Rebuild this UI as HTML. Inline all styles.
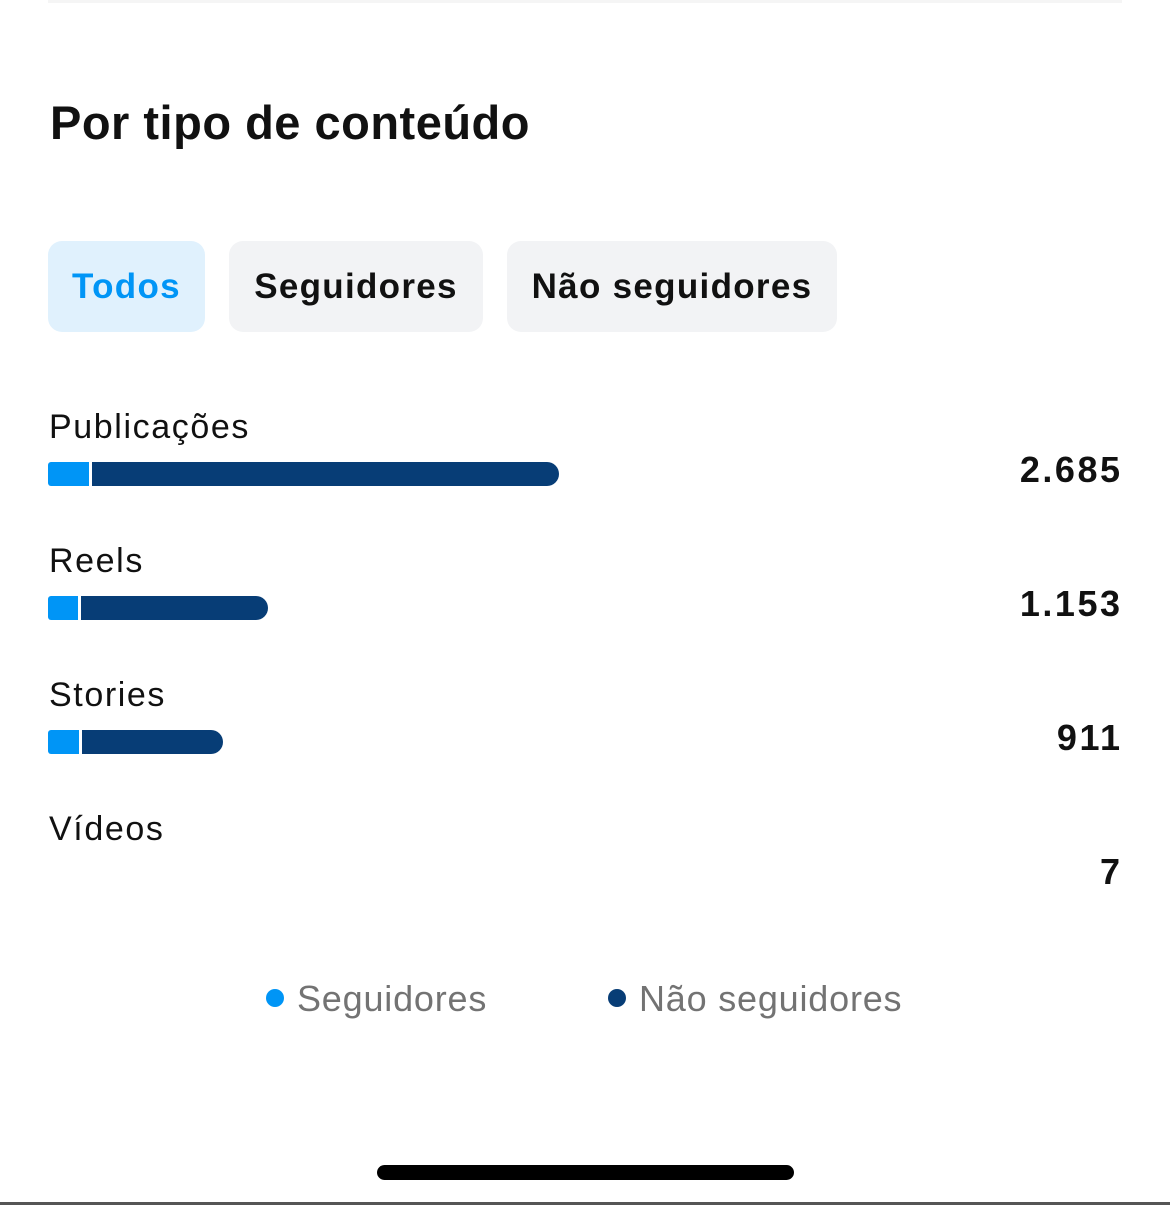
<!DOCTYPE html>
<html><head><meta charset="utf-8"><style>
body{margin:0;width:1170px;height:1205px;background:#fff;position:relative;overflow:hidden;font-family:"Liberation Sans",sans-serif;color:#111}
.a{position:absolute}
.btn{position:absolute;top:241px;height:91px;border-radius:14px;background:#f2f3f5;font-weight:bold;font-size:35px;letter-spacing:1.3px;line-height:91px;text-align:center;color:#111}
.lbl{position:absolute;left:49px;font-size:34px;line-height:40px;letter-spacing:1.6px}
.num{position:absolute;right:50px;font-size:36px;font-weight:bold;line-height:40px;text-align:right;letter-spacing:2.5px;margin-right:-2.5px}
.l{position:absolute;left:48px;height:24px;background:#0095f6;border-radius:3px 0 0 3px}
.d{position:absolute;height:24px;background:#073d76;border-radius:0 12px 12px 0}
.dot{position:absolute;width:18px;height:18px;border-radius:50%}
.lg{position:absolute;font-size:36px;color:#737373;line-height:40px;letter-spacing:0.8px}
</style></head><body>
<div class="a" style="left:48px;top:0;width:1074px;height:3px;background:#f5f5f5"></div>
<div class="a" style="left:50px;top:96px;font-size:47px;font-weight:bold;line-height:54px;letter-spacing:0.5px">Por tipo de conteúdo</div>
<div class="btn" style="left:48px;width:157px;background:#e0f1fd;color:#0095f6">Todos</div>
<div class="btn" style="left:229px;width:254px">Seguidores</div>
<div class="btn" style="left:507px;width:330px">Não seguidores</div>

<div class="lbl" style="top:407px">Publicações</div>
<div class="l" style="top:462px;width:41px"></div><div class="d" style="top:462px;left:92px;width:467px"></div>
<div class="num" style="top:450px">2.685</div>

<div class="lbl" style="top:541px">Reels</div>
<div class="l" style="top:596px;width:30px"></div><div class="d" style="top:596px;left:81px;width:187px"></div>
<div class="num" style="top:584px">1.153</div>

<div class="lbl" style="top:675px">Stories</div>
<div class="l" style="top:730px;width:31px"></div><div class="d" style="top:730px;left:82px;width:141px"></div>
<div class="num" style="top:718px">911</div>

<div class="lbl" style="top:809px">Vídeos</div>
<div class="num" style="top:852px">7</div>

<div class="dot" style="left:266px;top:989px;background:#0095f6"></div>
<div class="lg" style="left:297px;top:979px">Seguidores</div>
<div class="dot" style="left:608px;top:989px;background:#073d76"></div>
<div class="lg" style="left:639px;top:979px">Não seguidores</div>

<div class="a" style="left:377px;top:1165px;width:417px;height:15px;border-radius:8px;background:#000"></div>
<div class="a" style="left:0;top:1202px;width:1170px;height:3px;background:#555"></div>
</body></html>
